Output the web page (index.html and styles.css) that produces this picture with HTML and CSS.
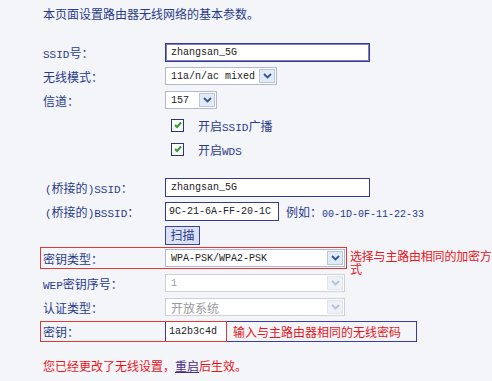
FILE: index.html
```html
<!DOCTYPE html>
<html lang="zh-CN">
<head>
<meta charset="UTF-8">
<title>无线网络基本设置</title>
<link rel="stylesheet" href="styles.css">
</head>
<body>
<div class="page">
    <p class="intro">本页面设置路由器无线网络的基本参数。</p>

    <div class="form">
        <!-- 本机无线 -->
        <div class="row">
            <label><span class="en">SSID</span>号：</label>
            <input class="txt ssid" type="text" value="zhangsan_5G">
        </div>
        <div class="row">
            <label>无线模式：</label>
            <div class="sel mode"><span class="val mono">11a/n/ac mixed</span><span class="arrow"><svg width="9" height="6" viewBox="0 0 9 6"><path d="M1 1l3.5 3.5L8 1" fill="none" stroke="currentColor" stroke-width="1.8"/></svg></span></div>
        </div>
        <div class="row">
            <label>信道：</label>
            <div class="sel chan"><span class="val mono">157</span><span class="arrow"><svg width="9" height="6" viewBox="0 0 9 6"><path d="M1 1l3.5 3.5L8 1" fill="none" stroke="currentColor" stroke-width="1.8"/></svg></span></div>
        </div>
        <div class="row cb first">
            <label></label>
            <span class="check"><svg width="10" height="10" viewBox="0 0 10 10"><path d="M2 5l2 2 4-4.5" fill="none" stroke="#2f9c2f" stroke-width="2"/></svg></span>
            <span class="cbtext">开启<span class="en">SSID</span>广播</span>
        </div>
        <div class="row cb">
            <label></label>
            <span class="check"><svg width="10" height="10" viewBox="0 0 10 10"><path d="M2 5l2 2 4-4.5" fill="none" stroke="#2f9c2f" stroke-width="2"/></svg></span>
            <span class="cbtext">开启<span class="en">WDS</span></span>
        </div>

        <!-- 桥接 -->
        <div class="row gap">
            <label class="br"><span class="en">(</span>桥接的<span class="en">)SSID</span>：</label>
            <input class="txt bssid-name" type="text" value="zhangsan_5G">
        </div>
        <div class="row">
            <label class="br"><span class="en">(</span>桥接的<span class="en">)BSSID</span>：</label>
            <input class="txt mac" type="text" value="9C-21-6A-FF-20-1C">
            <span class="eg">例如：<span class="mono">00-1D-0F-11-22-33</span></span>
        </div>
        <div class="row">
            <label></label>
            <button class="scan">扫描</button>
        </div>

        <!-- 加密 -->
        <div class="row keytype">
            <div class="redbox">
                <label>密钥类型：</label>
                <div class="sel wide"><span class="val mono">WPA-PSK/WPA2-PSK</span><span class="arrow"><svg width="9" height="6" viewBox="0 0 9 6"><path d="M1 1l3.5 3.5L8 1" fill="none" stroke="currentColor" stroke-width="1.8"/></svg></span></div>
            </div>
            <span class="hint">选择与主路由相同的加密方式</span>
        </div>
        <div class="row">
            <label><span class="en">WEP</span>密钥序号：</label>
            <div class="sel wide off"><span class="val mono">1</span><span class="arrow"><svg width="9" height="6" viewBox="0 0 9 6"><path d="M1 1l3.5 3.5L8 1" fill="none" stroke="currentColor" stroke-width="1.8"/></svg></span></div>
        </div>
        <div class="row">
            <label>认证类型：</label>
            <div class="sel wide off"><span class="val">开放系统</span><span class="arrow"><svg width="9" height="6" viewBox="0 0 9 6"><path d="M1 1l3.5 3.5L8 1" fill="none" stroke="currentColor" stroke-width="1.8"/></svg></span></div>
        </div>
        <div class="row key">
            <div class="redbox">
                <label>密钥：</label>
                <input class="pwd" type="text" value="1a2b3c4d">
            </div>
            <span class="bluehint">输入与主路由器相同的无线密码</span>
        </div>
    </div>

    <p class="notice">您已经更改了无线设置，<a href="#">重启</a>后生效。</p>
</div>
</body>
</html>
```

FILE: styles.css
```css
body {margin:0;background:#f4f5f9;color:#283a8c;font-family:"Noto Sans CJK SC","Liberation Sans",sans-serif;font-size:12px;}
.page {padding:6px 0 0 43px;width:449px;overflow:hidden;}
.intro {margin:0;line-height:16px;}
.en {font-family:"Liberation Mono","Noto Sans CJK SC",monospace;font-size:11px;}
.mono {font-family:"Liberation Mono",monospace;font-size:10px;}

.form {margin-top:18px;}
.row {display:flex;align-items:center;height:24px;}
.row label {width:122px;flex:none;white-space:nowrap;}
.row label.br {margin-left:2px;width:120px;}
.row.first {margin-top:1px;}
.row.gap {margin-top:14px;}

.txt {box-sizing:border-box;height:19px;margin:0;padding:0 5px;border:1px solid #343a92;background:#fff;color:#222;font-family:"Liberation Mono",monospace;font-size:10px;outline:none;}
.ssid {width:205px;box-shadow:inset 1px 1px 0 #7a7fc0,inset -1px -1px 0 #7a7fc0;}
.bssid-name {width:205px;}
.mac {width:114px;padding:0 3px;}
.eg {margin-left:7px;white-space:nowrap;}

.sel {box-sizing:border-box;display:flex;align-items:center;height:18px;border:1px solid #b3b7c6;background:#fff;color:#222;}
.sel .val {flex:1;padding-left:5px;white-space:nowrap;overflow:hidden;}
.sel .arrow {box-sizing:border-box;display:flex;align-items:center;justify-content:center;width:16px;height:14px;margin-right:1px;border:1px solid #b6c6df;background:#e1eaf7;color:#33558f;}
.mode {width:112px;}
.chan {width:52px;}
.wide {width:180px;}
.sel.off {border-color:#cfd0d6;color:#9a9a9a;}
.sel.off .arrow {border-color:#dde4ee;background:#eef2f8;color:#b3c0d6;}

.check {box-sizing:border-box;display:flex;align-items:center;justify-content:center;width:13px;height:13px;margin-left:6px;border:1px solid #2a3478;background:#fff;}
.cbtext {margin-left:14px;}

.scan {box-sizing:border-box;height:19px;width:35px;padding:0;border:1px solid #3a4597;background:#d9e1f2;color:#283a8c;font-family:inherit;font-size:12px;line-height:16px;}

.redbox {display:flex;align-items:center;border:1px solid #e23838;margin-left:-3px;padding-left:2px;}
.keytype {height:22px;}
.keytype .redbox {height:20px;width:303px;}
.hint {flex:1;min-width:0;margin-left:3px;color:#e8161c;line-height:13px;letter-spacing:-0.2px;padding-top:2px;align-self:flex-start;}
.row.keytype + .row {margin-top:2px;}

.key {height:21px;margin-top:2px;align-items:stretch;}
.key .redbox {height:19px;}
.pwd {box-sizing:border-box;width:61px;height:19px;margin:0;padding:0 3px;border:none;border-left:1px solid #3a3aa8;background:#fff;color:#222;font-family:"Liberation Mono",monospace;font-size:10px;outline:none;}
.bluehint {box-sizing:border-box;display:flex;align-items:center;width:190px;height:21px;padding-left:6px;border:1px solid #3a3aa8;border-left:none;color:#e8161c;white-space:nowrap;}

.notice {margin:16px 0 0;line-height:16px;color:#e8161c;}
.notice a {color:#4a2a86;text-decoration:underline;}
```
